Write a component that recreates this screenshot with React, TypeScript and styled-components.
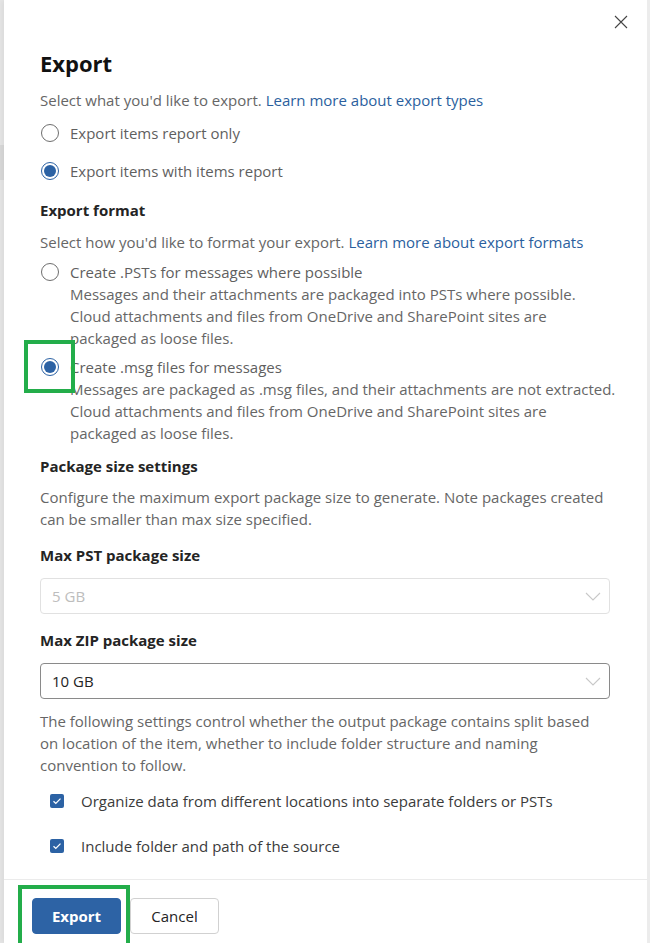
import React from "react";
import styled, { createGlobalStyle } from "styled-components";

const Global = createGlobalStyle`
  html, body { margin: 0; padding: 0; background: #e9e9e9; }
  body { font-family: "Open Sans", "Noto Sans", Arial, sans-serif; }
  * { box-sizing: border-box; }
`;

const Page = styled.div`
  display: flex;
  height: 943px;
  overflow: hidden;
`;

const Rail = styled.div`
  width: 4px;
  flex: none;
  background: linear-gradient(#e6e6e6 0, #e6e6e6 145px, #d9d9d9 145px, #d9d9d9 180px, #e6e6e6 180px);
`;

const Panel = styled.div`
  flex: 1;
  display: flex;
  flex-direction: column;
  background: #fff;
  border-right: 3px solid #ececec;
  box-shadow: -2px 0 6px rgba(0, 0, 0, 0.06);
`;

const Header = styled.div`
  height: 44px;
  display: flex;
  justify-content: flex-end;
  align-items: center;
  padding-right: 10px;
`;

const CloseButton = styled.button`
  width: 32px;
  height: 32px;
  border: none;
  background: transparent;
  display: flex;
  align-items: center;
  justify-content: center;
  padding: 0;
  cursor: pointer;
`;

const Body = styled.div`
  flex: 1;
  overflow: hidden;
  padding: 3px 20px 0 36px;
  color: #616161;
  font-size: 15px;
  line-height: 22px;
`;

const Title = styled.h1`
  margin: 0;
  font-size: 22px;
  line-height: 32px;
  font-weight: 700;
  color: #111;
`;

const Text = styled.p<{ $top: number }>`
  margin: ${(p) => p.$top}px 0 0 0;
  color: #666;
`;

const Link = styled.a`
  color: #2b5f9e;
  text-decoration: none;
`;

const Heading = styled.h2<{ $top: number }>`
  margin: ${(p) => p.$top}px 0 0 0;
  font-size: 15px;
  line-height: 22px;
  font-weight: 700;
  color: #242424;
`;

const Option = styled.label<{ $top: number }>`
  display: grid;
  grid-template-columns: 18px 1fr;
  column-gap: 11px;
  margin-top: ${(p) => p.$top}px;
  padding-left: 1px;
  color: #5f5f5f;
`;

const RadioWrap = styled.span`
  position: relative;
  height: 22px;
  display: flex;
  align-items: center;
`;

const Radio = styled.span<{ $on?: boolean }>`
  width: 18px;
  height: 18px;
  border-radius: 50%;
  border: 1px solid ${(p) => (p.$on ? "#2c62a4" : "#6e6e6e")};
  display: flex;
  align-items: center;
  justify-content: center;
  &::after {
    content: "";
    width: 12px;
    height: 12px;
    border-radius: 50%;
    background: ${(p) => (p.$on ? "#2c62a4" : "transparent")};
  }
`;

const OptionDesc = styled.span`
  grid-column: 2;
  color: #666;
`;

const Highlight = styled.span<{ $l: number; $t: number; $w: number; $h: number }>`
  position: absolute;
  left: ${(p) => p.$l}px;
  top: ${(p) => p.$t}px;
  width: ${(p) => p.$w}px;
  height: ${(p) => p.$h}px;
  border: 4px solid #23ad4a;
  pointer-events: none;
`;

const Select = styled.div<{ $disabled?: boolean; $top: number }>`
  margin-top: ${(p) => p.$top}px;
  height: 36px;
  width: 570px;
  border: 1px solid ${(p) => (p.$disabled ? "#e1e1e1" : "#8a8a8a")};
  border-radius: 4px;
  display: flex;
  align-items: center;
  justify-content: space-between;
  padding: 0 8px 0 11px;
  color: ${(p) => (p.$disabled ? "#bdbdbd" : "#242424")};
`;

const Check = styled.label<{ $top: number }>`
  display: flex;
  align-items: center;
  gap: 17px;
  margin-top: ${(p) => p.$top}px;
  padding-left: 10px;
  color: #3b3b3b;
`;

const Box = styled.span`
  width: 14px;
  height: 14px;
  flex: none;
  border-radius: 2px;
  background: #2c62a4;
  display: flex;
  align-items: center;
  justify-content: center;
`;

const Footer = styled.div`
  height: 64px;
  flex: none;
  border-top: 1px solid #ebebeb;
  display: flex;
  align-items: flex-start;
  gap: 9px;
  padding: 18px 0 0 28px;
`;

const Button = styled.button<{ $primary?: boolean }>`
  position: relative;
  height: 36px;
  width: 89px;
  border-radius: 4px;
  font-family: inherit;
  font-size: 15px;
  font-weight: ${(p) => (p.$primary ? 700 : 400)};
  color: ${(p) => (p.$primary ? "#fff" : "#242424")};
  background: ${(p) => (p.$primary ? "#2d63a5" : "#fff")};
  border: 1px solid ${(p) => (p.$primary ? "#2d63a5" : "#d1d1d1")};
  padding: 0;
`;

const Chevron = () => (
  <svg width="16" height="9" viewBox="0 0 16 9" fill="none">
    <path d="M1 1l7 7 7-7" stroke="#c8c8c8" strokeWidth="1.1" />
  </svg>
);

const Tick = () => (
  <svg width="10" height="8" viewBox="0 0 10 8" fill="none">
    <path d="M1.5 4.2l2.3 2.2L8.5 1.6" stroke="#fff" strokeWidth="1.3" />
  </svg>
);

export default function App() {
  return (
    <>
      <Global />
      <Page>
        <Rail />
        <Panel>
          <Header>
            <CloseButton aria-label="Close">
              <svg width="14" height="14" viewBox="0 0 14 14">
                <path d="M1 1l12 12M13 1L1 13" stroke="#444" strokeWidth="1.1" />
              </svg>
            </CloseButton>
          </Header>
          <Body>
            <Title>Export</Title>
            <Text $top={10}>
              Select what you'd like to export. <Link>Learn more about export types</Link>
            </Text>
            <Option $top={11}>
              <RadioWrap>
                <Radio />
              </RadioWrap>
              <span>Export items report only</span>
            </Option>
            <Option $top={16}>
              <RadioWrap>
                <Radio $on />
              </RadioWrap>
              <span>Export items with items report</span>
            </Option>

            <Heading $top={17}>Export format</Heading>
            <Text $top={10}>
              Select how you'd like to format your export. <Link>Learn more about export formats</Link>
            </Text>
            <Option $top={8}>
              <RadioWrap>
                <Radio />
              </RadioWrap>
              <span>Create .PSTs for messages where possible</span>
              <OptionDesc>
                Messages and their attachments are packaged into PSTs where possible.
                <br />
                Cloud attachments and files from OneDrive and SharePoint sites are
                <br />
                packaged as loose files.
              </OptionDesc>
            </Option>
            <Option $top={7}>
              <RadioWrap>
                <Radio $on />
                <Highlight $l={-17} $t={-16} $w={51} $h={53} />
              </RadioWrap>
              <span>Create .msg files for messages</span>
              <OptionDesc>
                Messages are packaged as .msg files, and their attachments are not extracted.
                <br />
                Cloud attachments and files from OneDrive and SharePoint sites are
                <br />
                packaged as loose files.
              </OptionDesc>
            </Option>

            <Heading $top={11}>Package size settings</Heading>
            <Text $top={9}>
              Configure the maximum export package size to generate. Note packages created
              <br />
              can be smaller than max size specified.
            </Text>

            <Heading $top={14}>Max PST package size</Heading>
            <Select $top={12} $disabled>
              <span>5 GB</span>
              <Chevron />
            </Select>

            <Heading $top={15}>Max ZIP package size</Heading>
            <Select $top={12}>
              <span>10 GB</span>
              <Chevron />
            </Select>

            <Text $top={11}>
              The following settings control whether the output package contains split based
              <br />
              on location of the item, whether to include folder structure and naming
              <br />
              convention to follow.
            </Text>

            <Check $top={14}>
              <Box>
                <Tick />
              </Box>
              <span>Organize data from different locations into separate folders or PSTs</span>
            </Check>
            <Check $top={23}>
              <Box>
                <Tick />
              </Box>
              <span>Include folder and path of the source</span>
            </Check>
          </Body>
          <Footer>
            <Button $primary>
              Export
              <Highlight $l={-15} $t={-14} $w={112} $h={64} />
            </Button>
            <Button>Cancel</Button>
          </Footer>
        </Panel>
      </Page>
    </>
  );
}
